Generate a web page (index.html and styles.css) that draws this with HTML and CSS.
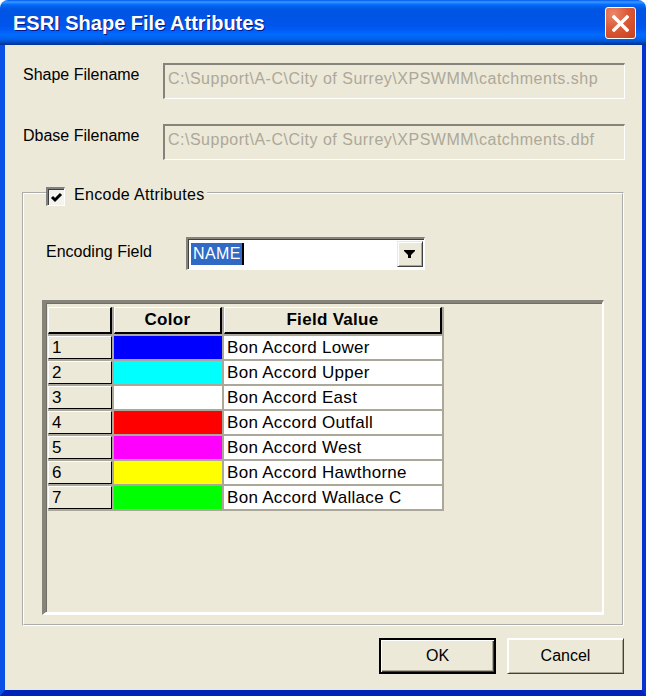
FILE: index.html
```html
<!DOCTYPE html>
<html>
<head>
<meta charset="utf-8">
<link rel="stylesheet" href="styles.css">
</head>
<body>
<div class="window">
  <div class="titlebar">
    <span class="title">ESRI Shape File Attributes</span>
    <div class="close">
      <svg width="17" height="17" viewBox="0 0 17 17"><path d="M2 2 L15 15 M15 2 L2 15" stroke="#fff" stroke-width="3.4" stroke-linecap="square"/></svg>
    </div>
  </div>
  <div class="frame">
    <div class="client">
      <div class="field-row">
        <span class="label">Shape Filename</span>
        <div class="textbox">C:\Support\A-C\City of Surrey\XPSWMM\catchments.shp</div>
      </div>
      <div class="field-row second">
        <span class="label">Dbase Filename</span>
        <div class="textbox">C:\Support\A-C\City of Surrey\XPSWMM\catchments.dbf</div>
      </div>
      <fieldset class="group">
        <legend class="legend">
          <span class="checkbox">
            <svg width="13" height="13" viewBox="0 0 13 13"><path d="M2 6 L5 9 L11 3" fill="none" stroke="#000" stroke-width="3"/></svg>
          </span>
          <span class="legend-text">Encode Attributes</span>
        </legend>
        <div class="enc-row">
          <span class="enc-label">Encoding Field</span>
          <div class="combo">
            <span class="sel">NAME</span>
            <span class="drop">
              <svg width="12" height="10" viewBox="0 0 12 10"><path d="M0 0 H11 V1 L7 5 V8 H4 V5 L0 1 Z" fill="#000"/></svg>
            </span>
          </div>
        </div>
        <div class="gridbox">
          <div class="table">
            <div class="hcell"></div>
            <div class="hcell">Color</div>
            <div class="hcell">Field Value</div>

            <div class="rh">1</div><div class="sw c-blue"></div><div class="val">Bon Accord Lower</div>
            <div class="rh">2</div><div class="sw c-cyan"></div><div class="val">Bon Accord Upper</div>
            <div class="rh">3</div><div class="sw c-white"></div><div class="val">Bon Accord East</div>
            <div class="rh">4</div><div class="sw c-red"></div><div class="val">Bon Accord Outfall</div>
            <div class="rh">5</div><div class="sw c-magenta"></div><div class="val">Bon Accord West</div>
            <div class="rh">6</div><div class="sw c-yellow"></div><div class="val">Bon Accord Hawthorne</div>
            <div class="rh">7</div><div class="sw c-green"></div><div class="val">Bon Accord Wallace C</div>
          </div>
        </div>
      </fieldset>
      <div class="buttons">
        <div class="btn default">OK</div>
        <div class="btn">Cancel</div>
      </div>
    </div>
  </div>
</div>
</body>
</html>
```
FILE: styles.css
```css
* { box-sizing: border-box; }
html, body { margin: 0; padding: 0; background: #fff; }
body { font-family: "Liberation Sans", Arial, sans-serif; font-size: 16px; color: #000; }

.window {
  width: 646px;
  height: 696px;
  display: flex;
  flex-direction: column;
}

.titlebar {
  height: 45px;
  flex: none;
  border-radius: 8px 8px 0 0;
  background: linear-gradient(180deg, #0058ee 0%, #3a93ff 4%, #288eff 6%, #127dff 8%, #036ffc 10%, #0262ee 14%, #0057e5 20%, #0054e3 24%, #0055eb 56%, #005bf5 66%, #026afe 76%, #0062ef 86%, #0052d6 92%, #0040ab 96%, #003092 100%);
  display: flex;
  align-items: flex-start;
  padding: 0 10px 0 13px;
}
.title {
  margin-top: 12px;
  color: #fff;
  font-weight: bold;
  font-size: 20px;
  text-shadow: 1px 1px 0 #0a1883;
  flex: 1;
}
.close {
  margin-top: 7px;
  width: 31px;
  height: 32px;
  border: 1px solid #fff;
  border-radius: 3px;
  background: radial-gradient(circle at 25% 20%, #e9896a 0%, #dc5a36 45%, #c8401d 100%);
  display: flex;
  align-items: center;
  justify-content: center;
}

.frame {
  flex: 1;
  display: flex;
  border-left: 5px solid #0a4fe6;
  border-right: 4px solid #0532d0;
  border-bottom: 6px solid #0022b8;
}
.client {
  flex: 1;
  background: #ece9d8;
  padding: 18px 17px 0 17px;
  display: flex;
  flex-direction: column;
}

.field-row {
  display: flex;
  align-items: flex-start;
  height: 36px;
}
.field-row.second { margin-top: 25px; }
.label {
  margin-left: 1px;
  line-height: 18px;
  margin-top: 3px;
}
.textbox {
  margin-left: auto;
  width: 462px;
  height: 36px;
  border-top: 2px solid #85837a;
  border-left: 2px solid #85837a;
  border-right: 1px solid #fff;
  border-bottom: 1px solid #fff;
  color: #aca899;
  letter-spacing: 0.5px;
  padding: 4px 0 0 3px;
  line-height: 20px;
  white-space: nowrap;
  overflow: hidden;
}

.group {
  margin: 23px 1px 0 0;
  padding: 0 18px 9px 20px;
  border: 2px groove #fff;
  min-width: 0;
}
.legend {
  margin-left: 2px;
  padding: 0 2px 0 0;
  height: 20px;
  display: flex;
  align-items: flex-start;
}
.checkbox {
  width: 19px;
  height: 19px;
  margin-top: 4px;
  border-top: 2px solid #808080;
  border-left: 2px solid #808080;
  border-right: 1px solid #fff;
  border-bottom: 1px solid #fff;
  box-shadow: inset 1px 1px 0 #404040;
  background: #f4f3ee;
  display: flex;
  align-items: center;
  justify-content: center;
}
.legend-text {
  margin-left: 9px;
  line-height: 23px;
  letter-spacing: 0.3px;
}

.enc-row {
  display: flex;
  align-items: center;
  margin-top: 34px;
}
.enc-label {
  width: 140px;
  margin-left: 2px;
  margin-top: -3px;
}
.combo {
  width: 239px;
  height: 33px;
  border-top: 2px solid #85837a;
  border-left: 2px solid #85837a;
  border-right: 1px solid #fff;
  border-bottom: 1px solid #fff;
  box-shadow: inset 1px 1px 0 #404040;
  background: #fff;
  display: flex;
  align-items: center;
  padding: 0 1px 0 3px;
}
.sel {
  background: #316ac5;
  color: #fff;
  height: 22px;
  line-height: 22px;
  padding: 0 1px 0 2px;
  letter-spacing: 0.4px;
  border-right: 2px solid #000;
}
.drop {
  margin-left: auto;
  width: 26px;
  height: 26px;
  background: #ece9d8;
  border-top: 1px solid #ece9d8;
  border-left: 1px solid #ece9d8;
  border-right: 1px solid #404040;
  border-bottom: 1px solid #404040;
  box-shadow: inset 1px 1px 0 #fff, inset -1px -1px 0 #aca899;
  display: flex;
  align-items: center;
  justify-content: center;
  padding-top: 2px;
}

.gridbox {
  margin: 30px 0 0 -2px;
  height: 315px;
  border-top: 3px solid #85837a;
  border-left: 4px solid #85837a;
  border-right: 2px solid #fff;
  border-bottom: 3px solid #fff;
  box-shadow: inset 1px 1px 0 #716f64;
  padding: 4px 0 0 2px;
  background: #ece9d8;
}
.table {
  display: grid;
  grid-template-columns: 64px 108px 218px;
  grid-template-rows: 27px repeat(7, 23px);
  gap: 2px;
  background: #aca899;
  padding: 0 2px 2px 0;
  width: max-content;
  font-size: 17px;
  letter-spacing: 0.3px;
}
.hcell {
  background: #ece9d8;
  border-top: 1px solid #fff;
  border-left: 1px solid #fff;
  border-right: 2px solid #000;
  border-bottom: 2px solid #000;
  font-weight: bold;
  text-align: center;
  line-height: 24px;
}
.rh {
  background: #ece9d8;
  border-top: 1px solid #fff;
  border-left: 1px solid #fff;
  border-right: 1px solid #000;
  border-bottom: 1px solid #000;
  padding-left: 3px;
  line-height: 22px;
}
.val {
  background: #fff;
  padding-left: 3px;
  line-height: 23px;
  white-space: nowrap;
}
.c-blue { background: #0000ff; }
.c-cyan { background: #00ffff; }
.c-white { background: #ffffff; }
.c-red { background: #ff0000; }
.c-magenta { background: #ff00ff; }
.c-yellow { background: #ffff00; }
.c-green { background: #00ff00; }

.buttons {
  display: flex;
  justify-content: flex-end;
  gap: 11px;
  margin-top: 12px;
  margin-right: 1px;
}
.btn {
  width: 117px;
  height: 36px;
  background: #ece9d8;
  border-top: 1px solid #fff;
  border-left: 1px solid #fff;
  border-right: 1px solid #404040;
  border-bottom: 1px solid #404040;
  box-shadow: inset 1px 1px 0 #fff, inset -1px -1px 0 #aca899;
  display: flex;
  align-items: center;
  justify-content: center;
}
.btn.default {
  border: 2px solid #000;
  box-shadow: inset 1px 1px 0 #fff, inset -1px -1px 0 #404040, inset -2px -2px 0 #aca899;
}
```
